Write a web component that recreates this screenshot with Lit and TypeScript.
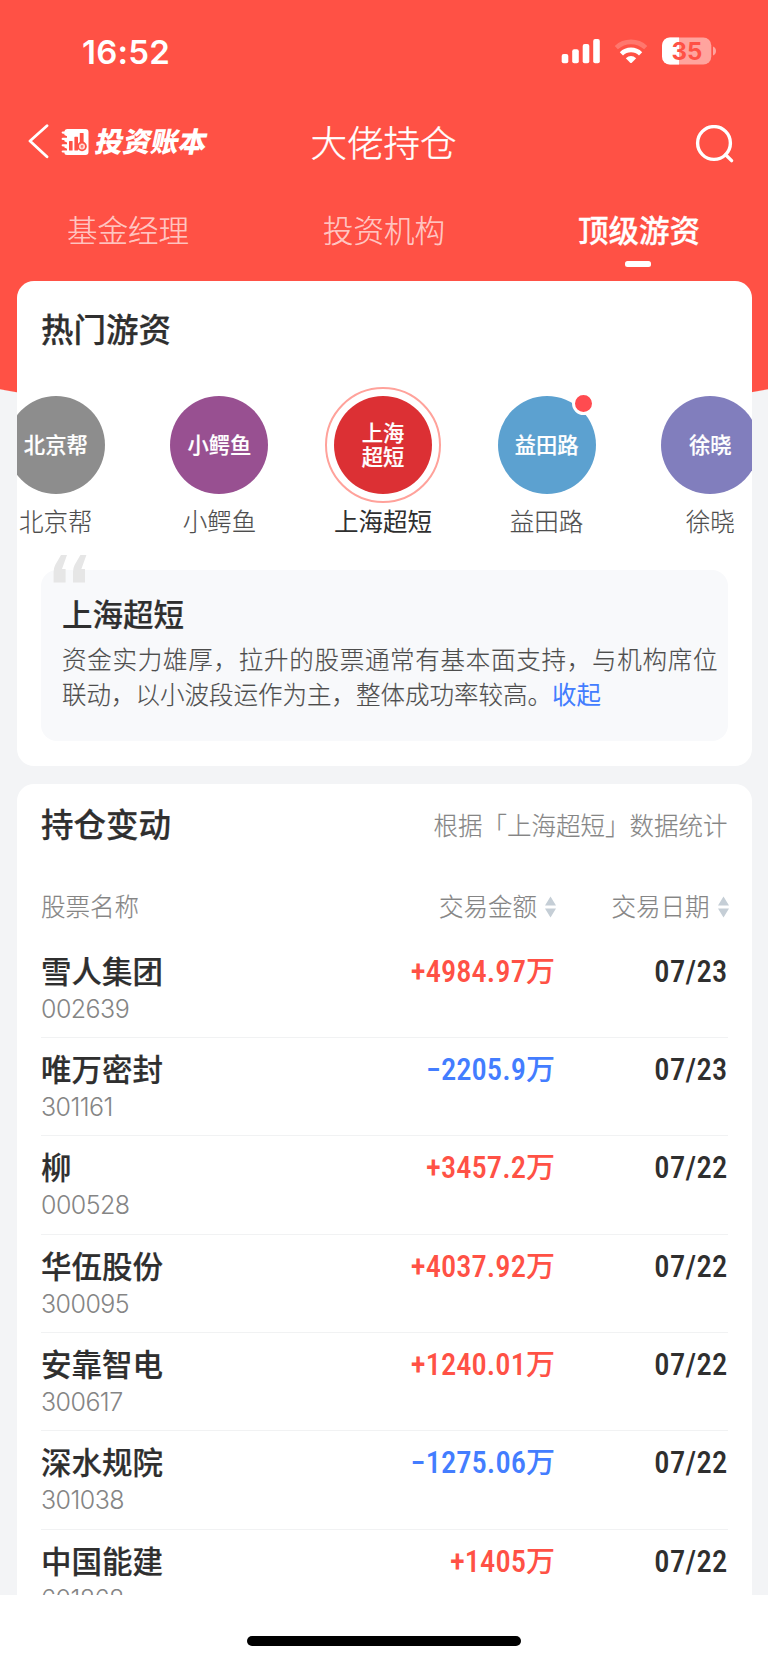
import { LitElement, html, css } from "lit";
import { customElement, property, state } from "lit/decorators.js";
import { classMap } from "lit/directives/class-map.js";

interface Trader {
  name: string;
  lines: string[];
  tone: string;
  unread?: boolean;
}

interface Trade {
  name: string;
  code: string;
  amount: string;
  date: string;
}

const TRADERS: Trader[] = [
  { name: "北京帮", lines: ["北京帮"], tone: "gray" },
  { name: "小鳄鱼", lines: ["小鳄鱼"], tone: "purple" },
  { name: "上海超短", lines: ["上海", "超短"], tone: "red" },
  { name: "益田路", lines: ["益田路"], tone: "blue", unread: true },
  { name: "徐晓", lines: ["徐晓"], tone: "violet" },
];

const TRADES: Trade[] = [
  { name: "雪人集团", code: "002639", amount: "+4984.97", date: "07/23" },
  { name: "唯万密封", code: "301161", amount: "−2205.9", date: "07/23" },
  { name: "柳", code: "000528", amount: "+3457.2", date: "07/22" },
  { name: "华伍股份", code: "300095", amount: "+4037.92", date: "07/22" },
  { name: "安靠智电", code: "300617", amount: "+1240.01", date: "07/22" },
  { name: "深水规院", code: "301038", amount: "−1275.06", date: "07/22" },
  { name: "中国能建", code: "601868", amount: "+1405", date: "07/22" },
];

@customElement("status-bar")
class StatusBar extends LitElement {
  static styles = css`
    :host {
      display: flex;
      height: 102px;
      align-items: center;
      justify-content: space-between;
      padding: 0 51px 0 82px;
      box-sizing: border-box;
      color: #fff;
    }
    .time {
      font: 600 33px/40px Inter, sans-serif;
      letter-spacing: 0.2px;
      padding-top: 1px;
    }
    svg {
      display: block;
    }
    .level {
      font: 700 24px Inter, sans-serif;
      fill: #ff5145;
    }
  `;
  render() {
    return html`
      <div class="time">16:52</div>
      <svg width="156" height="30" viewBox="561 36 156 30">
        <g fill="#fff">
          <rect x="561.7" y="54" width="6.6" height="9.2" rx="2" />
          <rect x="572.2" y="49.3" width="6.6" height="13.9" rx="2" />
          <rect x="582.7" y="44" width="6.6" height="19.2" rx="2" />
          <rect x="593.2" y="39" width="6.6" height="24.2" rx="2" />
        </g>
        <g fill="none" stroke="#fff" stroke-width="4.6">
          <path d="M616.3 47.6 A21.6 21.6 0 0 1 645.7 47.6" opacity=".22" />
          <path d="M621.4 53.8 A13.8 13.8 0 0 1 640.6 53.8" />
        </g>
        <path d="M625.8 58.2 Q631 53.8 636.2 58.2 L631.8 62.7 Q631 63.4 630.2 62.7 Z" fill="#fff" />
        <rect x="662" y="37.4" width="49.3" height="27.2" rx="8" fill="#fff" opacity=".48" />
        <path d="M679 37.4 h-9 a8 8 0 0 0 -8 8 v11.2 a8 8 0 0 0 8 8 h9 Z" fill="#fff" />
        <path d="M713 46.5 q3 1.2 3 4.5 t-3 4.5 Z" fill="#fff" opacity=".48" />
        <text class="level" x="687" y="59.8" text-anchor="middle">35</text>
      </svg>
    `;
  }
}

@customElement("nav-bar")
class NavBar extends LitElement {
  static styles = css`
    :host {
      display: grid;
      grid-template-columns: 1fr auto 1fr;
      align-items: center;
      height: 82px;
      padding: 0 29px 0 28px;
      color: #fff;
    }
    .left {
      display: flex;
      align-items: center;
      padding-bottom: 2px;
    }
    .back {
      margin-right: 12px;
    }
    .brand {
      margin-left: 7px;
      font-size: 27.8px;
      line-height: 36px;
      font-weight: 900;
      transform: skewX(-12deg);
      padding-bottom: 4px;
    }
    .title {
      font-size: 36.5px;
      line-height: 48px;
      font-weight: 300;
      -webkit-text-stroke: 0.35px #fff;
      padding-bottom: 3px;
    }
    .search {
      justify-self: end;
      margin-top: 4px;
      margin-right: 4px;
    }
    svg {
      display: block;
    }
  `;
  render() {
    return html`
      <div class="left">
        <svg class="back" width="21" height="36" viewBox="0 0 21 36" fill="none" stroke="#fff"
          stroke-width="2.8" stroke-linecap="round" stroke-linejoin="round">
          <path d="M19 1.8 L2 17 L19 32.8" />
        </svg>
        <svg width="28" height="28" viewBox="0 0 28 28">
          <path fill="#fff" d="M6 1 H24.5 Q27.5 1 27.5 4 V24 Q27.5 27 24.5 27 H6 Q3.4 27 3.4 24.5 H2 Q.6 24.5 .6 23.6 Q.6 22.4 2 22.4 H6 V20.8 L3.4 19.6 V18.4 H2 Q.6 18.4 .6 17.3 Q.6 16.2 2 16.2 H6 V14.6 L3.4 13.2 V12 H2 Q.6 12 .6 10.9 Q.6 9.8 2 9.8 H6 V8.2 L3.4 7 V5.7 H2 Q.6 5.7 .6 4.6 Q.6 3.6 2 3.6 H3.4 Q3.6 1 6 1 Z" />
          <g fill="#ff5145">
            <rect x="8" y="13" width="3.6" height="9.6" rx=".6" />
            <rect x="13.4" y="8.8" width="3.6" height="13.8" rx=".6" />
            <rect x="18.8" y="5" width="3.8" height="12" rx=".6" />
            <circle cx="21" cy="18.4" r="4.8" />
          </g>
          <circle cx="21" cy="18.4" r="3" fill="#ffe1de" />
          <path d="M19.6 16.8 L21 18.2 L22.4 16.8 M21 18.2 V20.4 M19.6 18.8 H22.4" stroke="#ff5145" stroke-width=".8" fill="none" />
        </svg>
        <div class="brand">投资账本</div>
      </div>
      <div class="title">大佬持仓</div>
      <svg class="search" width="40" height="40" viewBox="0 0 40 40" fill="none" stroke="#fff" stroke-width="3.4" stroke-linecap="round">
        <circle cx="19" cy="18" r="16.4" />
        <path d="M30.6 29.8 L36.6 35.6" />
      </svg>
    `;
  }
}

@customElement("category-tabs")
class CategoryTabs extends LitElement {
  @state() private active = 2;
  static styles = css`
    :host {
      display: grid;
      grid-template-columns: repeat(3, 1fr);
      height: 97px;
    }
    .tab {
      display: flex;
      flex-direction: column;
      align-items: center;
      padding-top: 23px;
      font-size: 30.5px;
      line-height: 44px;
      font-weight: 300;
      color: rgba(255, 255, 255, 0.68);
      -webkit-text-stroke: 0.2px rgba(255, 255, 255, 0.6);
    }
    .active {
      color: #fff;
      font-weight: 500;
      padding-right: 2px;
      -webkit-text-stroke: 0.3px #fff;
    }
    .bar {
      width: 26px;
      height: 6px;
      border-radius: 2.5px;
      background: #fff;
      margin: 10px 2px 0 0;
    }
  `;
  render() {
    return ["基金经理", "投资机构", "顶级游资"].map(
      (label, i) => html`
        <div class=${classMap({ tab: true, active: i === this.active })} @click=${() => (this.active = i)}>
          ${label}${i === this.active ? html`<span class="bar"></span>` : ""}
        </div>
      `
    );
  }
}

@customElement("trader-item")
class TraderItem extends LitElement {
  @property({ attribute: false }) trader!: Trader;
  @property({ type: Boolean }) selected = false;
  static styles = css`
    :host {
      display: flex;
      flex-direction: column;
      align-items: center;
      width: 163.6px;
      flex: none;
    }
    .ring {
      position: relative;
      display: flex;
      align-items: center;
      justify-content: center;
      box-sizing: border-box;
      width: 116px;
      height: 116px;
      border-radius: 50%;
      border: 2.5px solid transparent;
    }
    .ring.on {
      border-color: #ffa29b;
    }
    .disc {
      display: flex;
      flex-direction: column;
      align-items: center;
      justify-content: center;
      width: 98px;
      height: 98px;
      box-sizing: border-box;
      padding-bottom: 2px;
      border-radius: 50%;
      color: #fff;
      font-size: 21.3px;
      line-height: 24px;
      font-weight: 500;
      -webkit-text-stroke: 0.2px #fff;
    }
    .gray { background: #8d8d8d; }
    .purple { background: #985091; }
    .red { background: #dc3034; }
    .blue { background: #5ca1d0; }
    .violet { background: #817ebd; }
    .dot {
      position: absolute;
      right: 8px;
      top: 3px;
      width: 17px;
      height: 17px;
      border-radius: 50%;
      border: 3.5px solid #fff;
      background: #ff4b50;
    }
    .name {
      margin-top: 1px;
      font-size: 24.5px;
      line-height: 34px;
      font-weight: 300;
      color: #4d4d4d;
      -webkit-text-stroke: 0.15px #4d4d4d;
    }
    .name.on {
      color: #2f2f2f;
      font-weight: 400;
      -webkit-text-stroke: 0;
    }
  `;
  render() {
    const on = this.selected;
    return html`
      <div class=${classMap({ ring: true, on })}>
        <div class=${classMap({ disc: true, [this.trader.tone]: true })}>
          ${this.trader.lines.map((l) => html`<span>${l}</span>`)}
        </div>
        ${this.trader.unread ? html`<i class="dot"></i>` : ""}
      </div>
      <div class=${classMap({ name: true, on })}>${this.trader.name}</div>
    `;
  }
}

@customElement("hot-traders")
class HotTraders extends LitElement {
  static styles = css`
    :host {
      display: block;
      height: 485px;
      box-sizing: border-box;
      background: #fff;
      border-radius: 17px;
      padding: 25px 24.5px 0 24px;
      overflow: hidden;
    }
    .heading {
      font-size: 32.5px;
      line-height: 44px;
      font-weight: 500;
      color: #2f2f2f;
      -webkit-text-stroke: 0.25px #2f2f2f;
    }
    .strip {
      display: flex;
      justify-content: center;
      margin: 37px -23.5px 0 -26px;
    }
    .about {
      position: relative;
      height: 171px;
      box-sizing: border-box;
      margin-top: 32px;
      padding: 22px 10px 0 21px;
      border-radius: 16px;
      background: #f8f9fb;
    }
    .quote {
      position: absolute;
      left: 11.5px;
      top: -15px;
    }
    .name {
      font-size: 30.5px;
      line-height: 42px;
      font-weight: 500;
      color: #2f2f2f;
      -webkit-text-stroke: 0.2px #2f2f2f;
    }
    .text {
      margin: 6.5px 0 0;
      font-size: 24.5px;
      line-height: 35.5px;
      font-weight: 300;
      color: #4d4d4d;
      -webkit-text-stroke: 0.15px #4d4d4d;
      text-align: justify;
    }
    .fold {
      color: #437dff;
      font-weight: 400;
      -webkit-text-stroke: 0;
    }
  `;
  render() {
    return html`
      <div class="heading">热门游资</div>
      <div class="strip">
        ${TRADERS.map((t, i) => html`<trader-item .trader=${t} ?selected=${i === 2}></trader-item>`)}
      </div>
      <div class="about">
        <svg class="quote" width="34" height="28" viewBox="0 0 34 28" fill="#e6e6e6">
          <path d="M8 0 H14 L9 14 H12.6 V27.5 H.6 V17 Q.6 13 2.2 10 Z M27.4 0 H33.4 L28.4 14 H32 V27.5 H20 V17 Q20 13 21.6 10 Z" />
        </svg>
        <div class="name">上海超短</div>
        <p class="text">资金实力雄厚，拉升的股票通常有基本面支持，与机构席位联动，以小波段运作为主，整体成功率较高。<span class="fold">收起</span></p>
      </div>
    `;
  }
}

@customElement("position-changes")
class PositionChanges extends LitElement {
  static styles = css`
    :host {
      display: block;
      background: #fff;
      border-radius: 17px 17px 0 0;
      padding: 18px 24.5px 0 24px;
    }
    .top {
      display: flex;
      justify-content: space-between;
      align-items: center;
      height: 46px;
    }
    .heading {
      font-size: 32.5px;
      font-weight: 500;
      color: #2f2f2f;
      line-height: 44px;
      padding-bottom: 4px;
      -webkit-text-stroke: 0.25px #2f2f2f;
    }
    .hint {
      font-size: 24.5px;
      line-height: 34px;
      font-weight: 300;
      color: #858585;
      -webkit-text-stroke: 0.15px #858585;
    }
    .cols {
      display: grid;
      grid-template-columns: 1fr 215px 172.5px;
      align-items: center;
    }
    .labels {
      margin-top: 41px;
      height: 34px;
      font-size: 24.5px;
      line-height: 34px;
      font-weight: 300;
      color: #858585;
      -webkit-text-stroke: 0.15px #858585;
    }
    .sort {
      display: flex;
      justify-content: flex-end;
      align-items: center;
      gap: 8px;
      margin-right: -1px;
    }
    .sort svg {
      margin-top: 3px;
    }
    .list {
      margin-top: 17px;
    }
    .row {
      height: 98.4px;
      box-sizing: border-box;
      border-bottom: 1.5px solid #f1f2f3;
      align-items: start;
      padding-top: 8px;
    }
    .name {
      font-size: 30.5px;
      line-height: 44px;
      font-weight: 500;
      color: #2f2f2f;
      -webkit-text-stroke: 0.2px #2f2f2f;
    }
    .code {
      font: 300 25px/34px Inter, sans-serif;
      letter-spacing: -0.55px;
      color: #858585;
    }
    .num {
      text-align: right;
      font-family: Roboto, "Noto Sans CJK SC", sans-serif;
      font-weight: 500;
      font-stretch: 85%;
      font-size: 30.5px;
      line-height: 44px;
      letter-spacing: 0.05px;
      white-space: nowrap;
      padding-top: 2px;
    }
    .unit {
      letter-spacing: 0;
      font-size: 29px;
    }
    .up { color: #ff5145; }
    .down { color: #437dff; }
    .date { color: #2f2f2f; letter-spacing: 0.3px; }
  `;
  private arrows() {
    return html`<svg width="11" height="22" viewBox="0 0 11 22" fill="#c5ced6">
      <path d="M5.5 .6 L11 9.6 H0 Z M5.5 21.4 L0 12.4 H11 Z" />
    </svg>`;
  }
  render() {
    return html`
      <div class="top">
        <div class="heading">持仓变动</div>
        <div class="hint">根据「上海超短」数据统计</div>
      </div>
      <div class="cols labels">
        <span>股票名称</span>
        <span class="sort">交易金额${this.arrows()}</span>
        <span class="sort">交易日期${this.arrows()}</span>
      </div>
      <div class="list">
        ${TRADES.map(
          (t) => html`
            <div class="cols row">
              <div>
                <div class="name">${t.name}</div>
                <div class="code">${t.code}</div>
              </div>
              <div class=${classMap({ num: true, up: t.amount[0] === "+", down: t.amount[0] !== "+" })}>${t.amount}<span class="unit">万</span></div>
              <div class="num date">${t.date}</div>
            </div>
          `
        )}
      </div>
    `;
  }
}

@customElement("app-root")
class AppRoot extends LitElement {
  static styles = css`
    :host {
      display: flex;
      flex-direction: column;
      height: 1663px;
      overflow: hidden;
      background: #fff;
      font-family: "Noto Sans CJK SC", sans-serif;
    }
    .screen {
      height: 1595px;
      overflow: hidden;
      background:
        radial-gradient(ellipse 480px 68px at 50% 349px, #ff5145 99%, transparent 100%) no-repeat,
        linear-gradient(#ff5145, #ff5145) 0 0 / 100% 349px no-repeat,
        #f3f4f6;
    }
    .cards {
      display: flex;
      flex-direction: column;
      gap: 17.5px;
      padding: 0 16px 0 17px;
    }
    .home {
      flex: 1;
      display: flex;
      justify-content: center;
      align-items: flex-end;
      padding-bottom: 17px;
    }
    .pill {
      width: 274px;
      height: 10px;
      border-radius: 5px;
      background: #000;
    }
  `;
  render() {
    return html`
      <div class="screen">
        <status-bar></status-bar>
        <nav-bar></nav-bar>
        <category-tabs></category-tabs>
        <div class="cards">
          <hot-traders></hot-traders>
          <position-changes></position-changes>
        </div>
      </div>
      <div class="home"><div class="pill"></div></div>
    `;
  }
}
